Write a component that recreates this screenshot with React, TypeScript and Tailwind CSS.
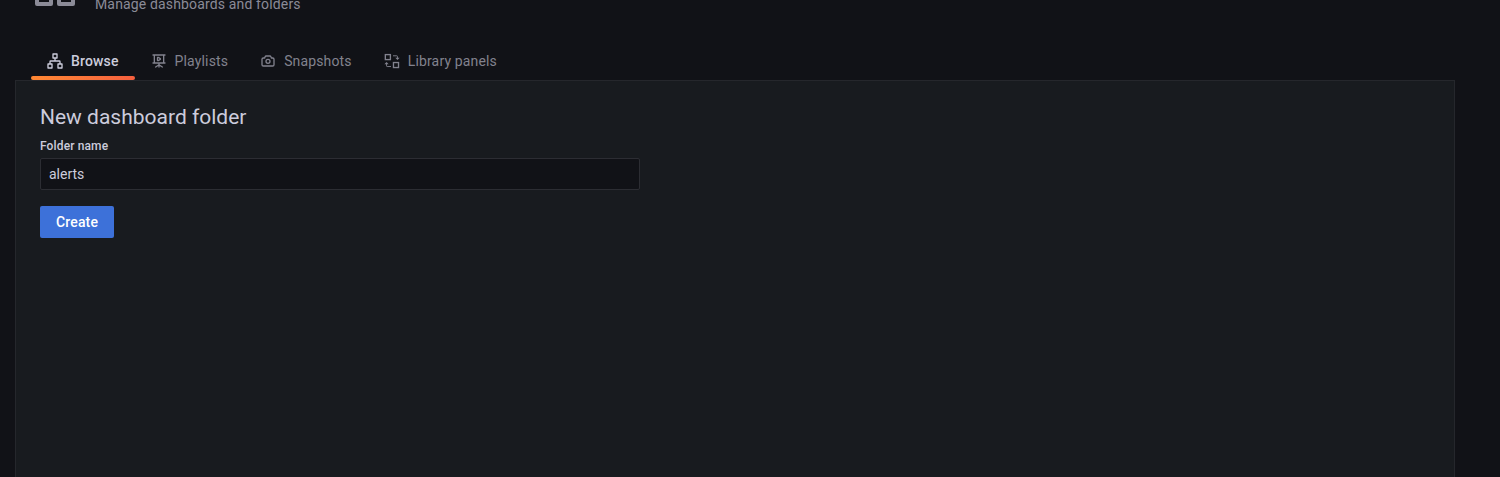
import React from 'react';

type IconProps = { className?: string };

const AppsIcon = ({ className }: IconProps) => (
  <svg viewBox="0 0 24 24" fill="currentColor" className={className}>
    <path d="M10,13H3a1,1,0,0,0-1,1v7a1,1,0,0,0,1,1h7a1,1,0,0,0,1-1V14A1,1,0,0,0,10,13ZM9,20H4V15H9ZM21,2H14a1,1,0,0,0-1,1v7a1,1,0,0,0,1,1h7a1,1,0,0,0,1-1V3A1,1,0,0,0,21,2ZM20,9H15V4h5Zm1,4H14a1,1,0,0,0-1,1v7a1,1,0,0,0,1,1h7a1,1,0,0,0,1-1V14A1,1,0,0,0,21,13Zm-1,7H15V15h5ZM10,2H3A1,1,0,0,0,2,3v7a1,1,0,0,0,1,1h7a1,1,0,0,0,1-1V3A1,1,0,0,0,10,2ZM9,9H4V4H9Z" />
  </svg>
);

const SitemapIcon = ({ className }: IconProps) => (
  <svg viewBox="0 0 24 24" fill="none" stroke="currentColor" strokeWidth="2" strokeLinejoin="round" className={className}>
    <rect x="9" y="1.5" width="6" height="6" />
    <rect x="1.5" y="16.5" width="6" height="6" />
    <rect x="16.5" y="16.5" width="6" height="6" />
    <path d="M12 7.5V12M4.5 16.5V13a1 1 0 0 1 1-1h13a1 1 0 0 1 1 1v3.5" />
  </svg>
);

const PresentationIcon = ({ className }: IconProps) => (
  <svg viewBox="0 0 24 24" fill="currentColor" className={className}>
    <path d="M21,14H20V4h1a1,1,0,0,0,0-2H3A1,1,0,0,0,3,4H4V14H3a1,1,0,0,0,0,2h8v1.15l-4.55,3A1,1,0,0,0,7,22a.94.94,0,0,0,.55-.17L11,19.55V21a1,1,0,0,0,2,0V19.55l3.45,2.28A.94.94,0,0,0,17,22a1,1,0,0,0,.55-1.83l-4.55-3V16h8a1,1,0,0,0,0-2Zm-3,0H6V4H18ZM9.61,12.26a1.73,1.73,0,0,0,1.76,0l3-1.74a1.76,1.76,0,0,0,0-3l-3-1.74a1.73,1.73,0,0,0-1.76,0,1.71,1.71,0,0,0-.87,1.52v3.48A1.71,1.71,0,0,0,9.61,12.26Zm1.13-4.58L13,9l-2.28,1.32Z" />
  </svg>
);

const CameraIcon = ({ className }: IconProps) => (
  <svg viewBox="0 0 24 24" fill="currentColor" className={className}>
    <path d="M19,6.5H17.72l-.32-1a3,3,0,0,0-2.84-2H9.44A3,3,0,0,0,6.6,5.55l-.32,1H5a3,3,0,0,0-3,3v8a3,3,0,0,0,3,3H19a3,3,0,0,0,3-3v-8A3,3,0,0,0,19,6.5Zm1,11a1,1,0,0,1-1,1H5a1,1,0,0,1-1-1v-8a1,1,0,0,1,1-1H7a1,1,0,0,0,1-.68l.54-1.64a1,1,0,0,1,.95-.68h5.12a1,1,0,0,1,.95.68l.54,1.64A1,1,0,0,0,17,8.5h2a1,1,0,0,1,1,1Zm-8-9a4,4,0,1,0,4,4A4,4,0,0,0,12,8.5Zm0,6a2,2,0,1,1,2-2A2,2,0,0,1,12,14.5Z" />
  </svg>
);

const LibraryPanelIcon = ({ className }: IconProps) => (
  <svg viewBox="0 0 24 24" fill="none" stroke="currentColor" strokeWidth="2" className={className}>
    <rect x="2" y="2.4" width="7.6" height="7.5" />
    <rect x="14.2" y="14.3" width="7.6" height="7.5" />
    <path strokeWidth="1.4" d="M13.5 4.2h5.7a1 1 0 0 1 1 1V8" />
    <path fill="currentColor" stroke="none" d="M17 7.2h6.4l-3.2 3.4z" />
    <path strokeWidth="1.4" d="M10.5 20.3H4.8a1 1 0 0 1-1-1V16" />
    <path fill="currentColor" stroke="none" d="M.6 16.8H7l-3.2-3.4z" />
  </svg>
);

const tabs = [
  { label: 'Browse', Icon: SitemapIcon, active: true },
  { label: 'Playlists', Icon: PresentationIcon, active: false },
  { label: 'Snapshots', Icon: CameraIcon, active: false },
  { label: 'Library panels', Icon: LibraryPanelIcon, active: false },
];

export default function App() {
  return (
    <div className="flex h-[477px] flex-col overflow-hidden bg-[#111217] pr-[45px] pl-[15px] font-[Roboto,sans-serif] text-sm tracking-[0.01071em] text-[#ccccdc]">
      <header className="-mt-[38px] flex h-[80px] shrink-0 pl-4 text-[#8b8b97]">
        <AppsIcon className="size-12 shrink-0" />
        <p className="mt-[31px] ml-4 leading-[22px]">Manage dashboards and folders</p>
      </header>
      <nav className="flex h-[38px] shrink-0 pl-4">
        {tabs.map(({ label, Icon, active }) => (
          <a
            key={label}
            className={
              active
                ? 'flex flex-col font-medium text-[#ccccdc]'
                : 'flex flex-col text-[#82828e]'
            }
          >
            <span className="flex h-[34px] items-center gap-2 px-4 pt-1">
              <Icon className="size-4 shrink-0" />
              <span className="leading-[22px] whitespace-nowrap">{label}</span>
            </span>
            {active && <span className="h-1 rounded-xs bg-linear-to-l from-[#f55f3e] to-[#ff8833]" />}
          </a>
        ))}
      </nav>
      <main className="min-h-0 flex-1 border border-b-0 border-[#25272c] bg-[#181b1f] px-6 pt-6">
        <h3 className="text-[21px] leading-6 tracking-normal">New dashboard folder</h3>
        <form className="flex flex-col items-start" onSubmit={(e) => e.preventDefault()}>
          <label htmlFor="folder" className="mt-[10px] text-xs leading-[15px] font-medium tracking-[0.01071em]">
            Folder name
          </label>
          <input
            id="folder"
            defaultValue="alerts"
            className="mt-1 h-8 w-[600px] rounded-xs border border-[#2c2d33] bg-[#111217] px-2 tracking-normal outline-none"
          />
          <button className="mt-4 h-8 rounded-xs bg-[#3d71d9] px-4 font-medium text-white">Create</button>
        </form>
      </main>
    </div>
  );
}
